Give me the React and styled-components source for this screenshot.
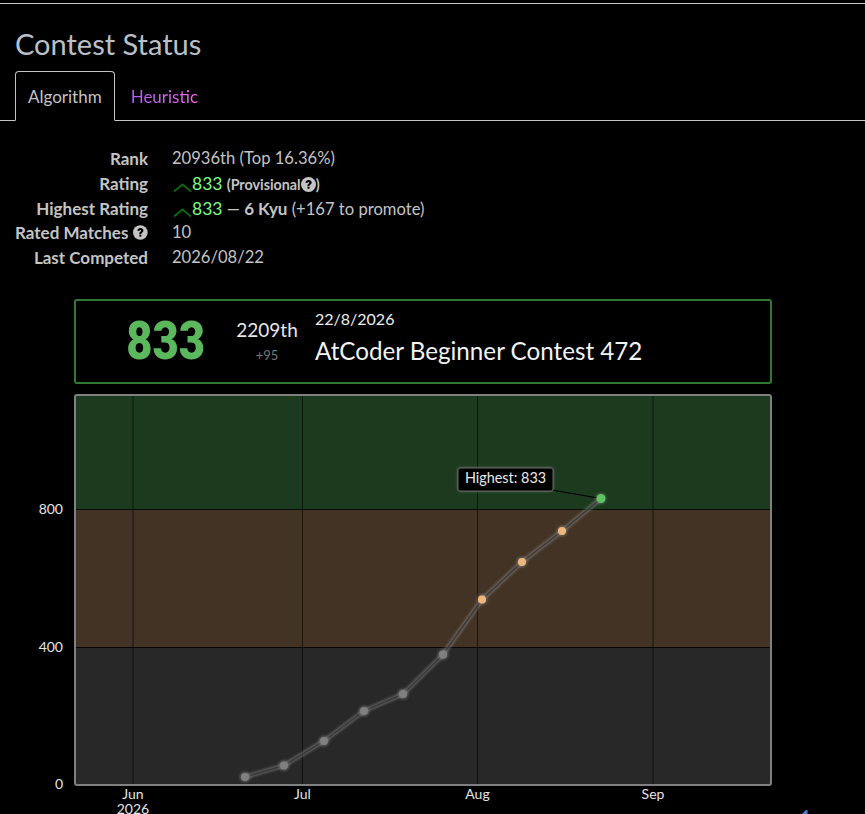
import React from "react";
import styled, { createGlobalStyle } from "styled-components";

const GlobalStyle = createGlobalStyle`
  html, body {
    margin: 0;
    background: #000;
    height: 100%;
    overflow: hidden;
  }
  body {
    font-family: Lato, "Liberation Sans", sans-serif;
    font-size: 16.6px;
    color: #c4c4c4;
  }
`;

const points = [
  [245, 777], [284, 765.5], [324, 741], [364, 711], [403, 694],
  [443, 654.5], [482, 599.5], [522, 562], [562, 531], [601, 498.5],
];

function dotColor(i) {
  if (i === points.length - 1) return "#5cc462";
  if (i >= 6) return "#efb77d";
  return "#808080";
}

function HelpIcon({ size = 15 }) {
  return (
    <svg width={size} height={size} viewBox="0 0 16 16" style={{ verticalAlign: "-2px" }}>
      <circle cx="8" cy="8" r="8" fill="#c4c4c4" />
      <path d="M4.8 6.1C4.9 4.2 6.3 3.1 8.1 3.1c1.9 0 3.3 1.1 3.3 2.8 0 1.2-.7 1.8-1.5 2.4-.6.4-.8.7-.8 1.3H6.9c0-1.2.3-1.8 1.1-2.3.6-.4.9-.7.9-1.2 0-.5-.4-.8-.9-.8-.6 0-1 .4-1.1 1z" fill="#000" />
      <rect x="6.9" y="10.3" width="2.2" height="2.2" fill="#000" />
    </svg>
  );
}

function Chevron() {
  return (
    <ChevronSvg width="19" height="9" viewBox="0 0 19 9">
      <path d="M1 8.5 L9.5 1.5 L18 8.5" fill="none" stroke="#0a6b12" strokeWidth="1.8" />
    </ChevronSvg>
  );
}

function RatingChart() {
  const line = points.map((p) => p.join(",")).join(" ");
  return (
    <ChartSvg width="865" height="430" viewBox="0 384 865 430">
      <defs>
        <filter id="glow" x="-20%" y="-20%" width="140%" height="140%">
          <feGaussianBlur stdDeviation="1.2" />
        </filter>
        <filter id="boxGlow" x="-10%" y="-30%" width="120%" height="160%">
          <feGaussianBlur stdDeviation="1.5" />
        </filter>
      </defs>
      <rect x="75" y="395" width="696" height="115" fill="#1c3a1e" />
      <rect x="75" y="510" width="696" height="137.5" fill="#423325" />
      <rect x="75" y="647.5" width="696" height="137" fill="#282828" />
      {[133, 302.5, 477.5, 653].map((x) => (
        <line key={x} x1={x} x2={x} y1="395" y2="785" stroke="#000" strokeOpacity="0.6" />
      ))}
      {[509.5, 647.5].map((y) => (
        <line key={y} x1="75" x2="771" y1={y} y2={y} stroke="#000" strokeOpacity="0.75" />
      ))}
      <rect x="75" y="395" width="696" height="390" rx="2" fill="none" stroke="#808080" strokeWidth="2" />

      <polyline points={line} fill="none" stroke="#aaa" strokeOpacity="0.4" strokeWidth="4.5" filter="url(#glow)" />
      <polyline points={line} fill="none" stroke="#3a3a3a" strokeWidth="1.5" />

      <line x1="552" y1="490" x2="601" y2="498.5" stroke="#000" strokeWidth="1.2" />
      {points.map(([x, y], i) => (
        <g key={x}>
          <circle cx={x} cy={y} r="5.5" fill="#aaa" fillOpacity="0.35" filter="url(#glow)" />
          <circle cx={x} cy={y} r={i === points.length - 1 ? 4.5 : 4} fill={dotColor(i)} />
        </g>
      ))}

      <rect x="458" y="468" width="95" height="23" rx="2" fill="#aaa" fillOpacity="0.7" filter="url(#boxGlow)" />
      <rect x="458" y="468" width="95" height="23" rx="2" fill="#000" stroke="#666" />
      <AxisText x="505.5" y="483" fill="#e8e8e8" textAnchor="middle" $size={14.4}>Highest: 833</AxisText>

      <AxisText x="63" y="514" textAnchor="end">800</AxisText>
      <AxisText x="63" y="652" textAnchor="end">400</AxisText>
      <AxisText x="63" y="789" textAnchor="end">0</AxisText>
      <AxisText x="133" y="799" textAnchor="middle">Jun</AxisText>
      <AxisText x="133" y="814" textAnchor="middle">2026</AxisText>
      <AxisText x="302.5" y="799" textAnchor="middle">Jul</AxisText>
      <AxisText x="477.5" y="799" textAnchor="middle">Aug</AxisText>
      <AxisText x="653" y="799" textAnchor="middle">Sep</AxisText>
      <path d="M802 814 L806 810 L807.5 810 L807.5 814 Z" fill="#4a80e0" />
    </ChartSvg>
  );
}

export default function App() {
  return (
    <Page>
      <GlobalStyle />
      <TopRule />
      <Title>Contest Status</Title>
      <Tabs>
        <Tab $active>Algorithm</Tab>
        <Tab><HeuristicLabel>Heuristic</HeuristicLabel></Tab>
      </Tabs>
      <Stats>
        <Label>Rank</Label>
        <Value>20936th (Top 16.36%)</Value>
        <Label>Rating</Label>
        <Value>
          <Chevron /><Green>833</Green> <Small>(Provisional<HelpIcon size={15} />)</Small>
        </Value>
        <Label>Highest Rating</Label>
        <Value>
          <Chevron /><Green>833</Green> — <b>6 Kyu</b> (+167 to promote)
        </Value>
        <Label>Rated Matches <HelpIcon /></Label>
        <Value>10</Value>
        <Label>Last Competed</Label>
        <Value>2026/08/22</Value>
      </Stats>
      <ContestCard>
        <BigRating>833</BigRating>
        <Placing>
          <Place>2209th</Place>
          <Delta>+95</Delta>
        </Placing>
        <ContestInfo>
          <ContestDate>22/8/2026</ContestDate>
          <ContestName>AtCoder Beginner Contest 472</ContestName>
        </ContestInfo>
      </ContestCard>
      <RatingChart />
    </Page>
  );
}

const Page = styled.div`
  height: 814px;
  overflow: hidden;
  display: flex;
  flex-direction: column;
  padding-top: 3px;
  box-sizing: border-box;
`;
const TopRule = styled.div`
  height: 1px;
  background: #c8c8c8;
  flex: none;
`;
const Title = styled.h2`
  margin: 22px 0 0 15px;
  font-size: 29px;
  font-weight: 400;
  line-height: 35px;
  color: #b9c0c8;
`;
const Tabs = styled.div`
  display: flex;
  margin-top: 10px;
  padding-left: 15px;
  height: 49px;
  border-bottom: 1px solid #c4c4c4;
  flex: none;
`;
const Tab = styled.div`
  box-sizing: border-box;
  height: 50px;
  padding: 0 12px;
  margin-right: 3px;
  line-height: 50px;
  font-size: 17px;
  border: 1px solid ${(p) => (p.$active ? "#c4c4c4" : "transparent")};
  border-bottom: ${(p) => (p.$active ? "1px solid #000" : "none")};
  border-radius: 4px 4px 0 0;
  background: ${(p) => (p.$active ? "#000" : "transparent")};
  color: #c4c4c4;
`;
const HeuristicLabel = styled.span`
  background: linear-gradient(90deg, #b45cff, #f46ae8);
  -webkit-background-clip: text;
  background-clip: text;
  color: transparent;
`;
const Stats = styled.div`
  display: grid;
  grid-template-columns: 133px auto;
  justify-content: start;
  column-gap: 24px;
  grid-auto-rows: 24.8px;
  margin: 25px 0 0 15px;
  line-height: 25px;
`;
const Label = styled.div`
  display: flex;
  justify-content: flex-end;
  align-items: center;
  gap: 5px;
  font-size: 17px;
  font-weight: 700;
  white-space: nowrap;
`;
const Value = styled.div`
  white-space: nowrap;
  b { font-weight: 700; font-size: 17px; }
`;
const ChevronSvg = styled.svg`
  vertical-align: -2px;
  margin-left: 1px;
`;
const Green = styled.span`
  color: #7dfc7d;
  font-size: 17.5px;
`;
const Small = styled.span`
  font-size: 14.3px;
  font-weight: 700;
`;
const ContestCard = styled.div`
  box-sizing: border-box;
  flex: none;
  display: flex;
  align-items: center;
  width: 698px;
  height: 85px;
  margin: 29px 0 0 74px;
  border: 2px solid #2f7a33;
  border-radius: 3px;
  color: #fff;
`;
const BigRating = styled.div`
  width: 160px;
  padding-left: 19px;
  box-sizing: border-box;
  text-align: center;
  font-family: Roboto, "Liberation Sans", sans-serif;
  font-size: 54px;
  font-weight: 900;
  line-height: 60px;
  color: #5cb85c;
  flex: none;
  transform: scaleX(0.84);
  transform-origin: 90px 50%;
`;
const Placing = styled.div`
  width: 62px;
  padding-top: 2px;
  text-align: center;
  flex: none;
  margin-right: 17px;
`;
const Place = styled.div`
  font-size: 19px;
  line-height: 26px;
  color: #e8e8e8;
`;
const Delta = styled.div`
  font-size: 13px;
  line-height: 24px;
  color: #777;
`;
const ContestInfo = styled.div`
  display: flex;
  flex-direction: column;
  padding-bottom: 2px;
`;
const ContestDate = styled.div`
  font-size: 16px;
  line-height: 22px;
  color: #eee;
`;
const ContestName = styled.div`
  font-size: 24.2px;
  line-height: 42px;
  color: #f2f2f2;
`;
const ChartSvg = styled.svg`
  display: block;
  flex: none;
`;
const AxisText = styled.text`
  font-family: Lato, "Liberation Sans", sans-serif;
  font-size: ${(p) => p.$size || 14}px;
  fill: ${(p) => p.fill || "#e4e4e4"};
`;
